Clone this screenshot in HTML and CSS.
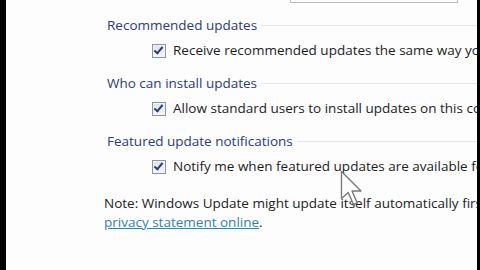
FILE: index.html
```
<!DOCTYPE html>
<html lang="en">
<head>
    <meta charset="UTF-8">
    <title>Windows Update settings</title>
    <link rel="stylesheet" href="styles.css">
</head>
<body>
    <div class="frame">
        <div class="panel">
            <!-- bottom edge of the dropdown that is scrolled off the top -->
            <div class="combo-edge"></div>

            <div class="group">
                <div class="group-title"><span>Recommended updates</span><div class="rule"></div></div>
                <label class="check-row">
                    <span class="checkbox checked"></span>
                    <span>Receive recommended updates the same way you receive important updates</span>
                </label>
            </div>

            <div class="group">
                <div class="group-title"><span>Who can install updates</span><div class="rule"></div></div>
                <label class="check-row">
                    <span class="checkbox checked"></span>
                    <span>Allow standard users to install updates on this computer</span>
                </label>
            </div>

            <div class="group">
                <div class="group-title"><span>Featured update notifications</span><div class="rule"></div></div>
                <label class="check-row">
                    <span class="checkbox checked"></span>
                    <span>Notify me when featured updates are available for my computer</span>
                </label>
            </div>

            <p class="note">
                Note: Windows Update might update itself automatically first when checking for other updates.  Read our<br>
                <a href="#">privacy statement online</a>.
            </p>

            <!-- mouse pointer -->
            <svg class="pointer" width="24" height="39" viewBox="0 0 16 26">
                <path d="M1 1 L1 19 L5.5 15 L9 23 L11.5 22 L8 14 L14 14 Z" fill="#fff" stroke="#777" stroke-width="0.9" stroke-linejoin="round"/>
            </svg>
        </div>
    </div>
</body>
</html>
```
FILE: styles.css
```
body {
    margin: 0;
    padding: 0;
    background-color: #000;
    font-family: 'Open Sans', 'Noto Sans', sans-serif;
    font-size: 13.5px;
    color: #222;
    overflow: hidden;
}
.frame {
    height: 270px;
    padding: 0 3px 0 6px;
}
.panel {
    position: relative;
    height: 100%;
    background-color: #fdfdfd;
    padding-left: 101px;
    overflow: hidden;
}
.combo-edge {
    margin-left: 183px;
    width: 166px;
    height: 2px;
    border: 1px solid #b9bcc2;
    border-top: none;
}
.group {
    margin-top: 13px;
}
.group + .group {
    margin-top: 14px;
}
.group-title {
    display: flex;
    align-items: center;
    line-height: 19px;
    color: #2a3b7e;
    white-space: nowrap;
}
.rule {
    flex: 1;
    height: 1px;
    margin-left: 4px;
    background-color: #e2e4e8;
}
.check-row {
    display: flex;
    align-items: center;
    margin-top: 6px;
    padding-left: 45px;
    line-height: 19px;
    white-space: nowrap;
    color: #1c1c1c;
}
.checkbox {
    flex: none;
    position: relative;
    width: 12px;
    height: 12px;
    margin-right: 7px;
    border: 1px solid #8e95a2;
    background: linear-gradient(#dfe3ea, #f4f6f9);
    box-shadow: inset 0 0 0 1px #f2f4f7;
}
.checkbox.checked::after {
    content: "";
    position: absolute;
    left: 3px;
    top: 0;
    width: 3px;
    height: 7px;
    border-right: 2px solid #2c3f78;
    border-bottom: 2px solid #2c3f78;
    transform: rotate(40deg);
}
.note {
    margin: 18px 0 0 -3px;
    line-height: 19px;
    white-space: nowrap;
    color: #222;
}
.note a {
    color: #2a86b0;
    text-decoration: underline;
}
.pointer {
    position: absolute;
    left: 334px;
    top: 170px;
}
```
